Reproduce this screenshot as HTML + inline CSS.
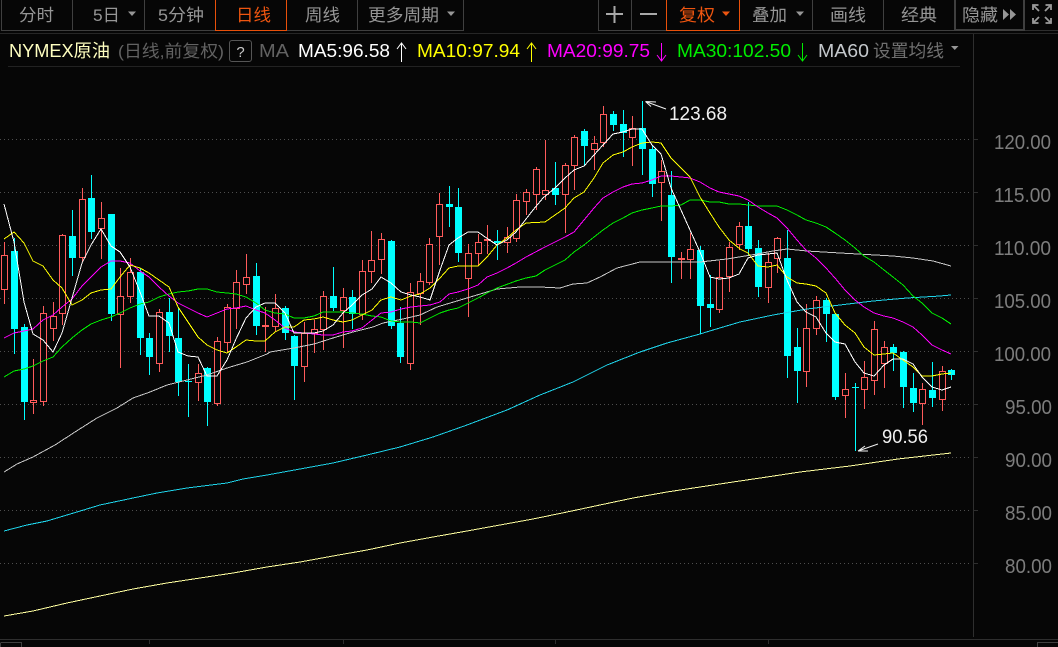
<!DOCTYPE html>
<html lang="zh">
<head>
<meta charset="utf-8">
<title>NYMEX原油</title>
<style>
html,body{margin:0;padding:0;width:1058px;height:647px;overflow:hidden;background:#060606}
svg{display:block}
text{font-family:"Liberation Sans","Noto Sans CJK SC",sans-serif}
.c{shape-rendering:crispEdges}
.l{fill:none;stroke-width:1;shape-rendering:crispEdges}
.t{font-size:17px;fill:#969696}
.ax{font-size:20px;fill:#7d7d7d}
.m{font-size:18px}
</style>
</head>
<body>
<svg width="1058" height="647" viewBox="0 0 1058 647" xmlns="http://www.w3.org/2000/svg">
<rect width="1058" height="647" fill="#060606"/>

<!-- toolbar frames -->
<g class="c" fill="none" stroke="#3f3f3f">
<path d="M1.5 0V30.5H463.5V0M72.5 0V30M144.5 0V30M357.5 0V30"/>
<path d="M598.5 0V30.5H1024.5V0M631.5 0V30M812.5 0V30M883.5 0V30M954.5 0V30"/>
<path d="M955.5 0V30M1023.5 0V30M955 29.5H1024"/>
<path d="M1025 30.5H1058" stroke="#2e2e2e"/>
</g>
<path class="c" d="M215.5 0V30.5H286.5V0M666.5 0V30.5H739.5V0" fill="none" stroke="#e8500a"/>
<path class="c" d="M0 33.5H1058" stroke="#262626" fill="none"/>
<path class="c" d="M8 66.5H960" stroke="#222" fill="none"/>

<!-- toolbar labels -->
<text class="t" x="19" y="21" textLength="35" lengthAdjust="spacingAndGlyphs">分时</text>
<text class="t" x="93" y="21" textLength="27" lengthAdjust="spacingAndGlyphs">5日</text>
<text class="t" x="158" y="21" textLength="46" lengthAdjust="spacingAndGlyphs">5分钟</text>
<text class="t" x="236" y="21" textLength="35" lengthAdjust="spacingAndGlyphs" style="fill:#ee5510">日线</text>
<text class="t" x="305" y="21" textLength="35" lengthAdjust="spacingAndGlyphs">周线</text>
<text class="t" x="368" y="21" textLength="71" lengthAdjust="spacingAndGlyphs">更多周期</text>
<text class="t" x="679" y="21" textLength="36" lengthAdjust="spacingAndGlyphs" style="fill:#ee5510">复权</text>
<text class="t" x="752" y="21" textLength="35" lengthAdjust="spacingAndGlyphs">叠加</text>
<text class="t" x="830" y="21" textLength="36" lengthAdjust="spacingAndGlyphs">画线</text>
<text class="t" x="901" y="21" textLength="36" lengthAdjust="spacingAndGlyphs">经典</text>
<text class="t" x="962" y="21" textLength="36" lengthAdjust="spacingAndGlyphs">隐藏</text>
<g fill="#969696">
<path d="M128 11.500h8l-4 4.500zM447 11.500h8l-4 4.500zM796 11.500h8l-4 4.500z"/>
<path d="M1003 9l6 5.500-6 5.500zM1010 9l6 5.500-6 5.500z"/>
<path d="M951 46h7.500l-3.750 4z"/>
</g>
<path d="M722 11.500h8l-4 4.500z" fill="#ee5510"/>
<g class="c" fill="#a8a8a8">
<rect x="606" y="13" width="17" height="2"/><rect x="613.500" y="6" width="2" height="17"/>
<rect x="640" y="13" width="17" height="2"/>
</g>
<g fill="none" stroke="#9a9a9a" stroke-width="1.800">
<path d="M1033 10V5H1038.500M1034 6L1039 11"/>
<path d="M1051 10V5H1045.500M1050 6L1045 11"/>
<path d="M1033 18V23H1038.500M1034 22L1039 17"/>
<path d="M1051 18V23H1045.500M1050 22L1045 17"/>
</g>

<!-- legend -->
<text class="m" x="9" y="57" textLength="101" lengthAdjust="spacingAndGlyphs" fill="#ffffc0">NYMEX原油</text>
<text x="118" y="57" font-size="17" textLength="106" lengthAdjust="spacingAndGlyphs" fill="#626262">(日线,前复权)</text>
<rect x="229.500" y="40.500" width="22" height="21" rx="2.500" fill="none" stroke="#555"/>
<text x="240.500" y="57" font-size="15" text-anchor="middle" fill="#c8c8c8">?</text>
<text class="m" x="259" y="57" textLength="30" lengthAdjust="spacingAndGlyphs" fill="#626262">MA</text>
<text class="m" x="298" y="57" textLength="92" lengthAdjust="spacingAndGlyphs" fill="#ffffff">MA5:96.58</text>
<text class="m" x="417" y="57" textLength="103" lengthAdjust="spacingAndGlyphs" fill="#ffff00">MA10:97.94</text>
<text class="m" x="547" y="57" textLength="103" lengthAdjust="spacingAndGlyphs" fill="#ff00ff">MA20:99.75</text>
<text class="m" x="677" y="57" textLength="114" lengthAdjust="spacingAndGlyphs" fill="#00ee00">MA30:102.50</text>
<text class="m" x="818" y="57" textLength="51" lengthAdjust="spacingAndGlyphs" fill="#c4c8cc">MA60</text>
<text x="873" y="57" font-size="17.500" textLength="71" lengthAdjust="spacingAndGlyphs" fill="#707070">设置均线</text>
<g fill="none">
<path d="M401.500 62V43M397 49L401.500 43L406 49" stroke="#fff"/>
<path d="M531.500 62V43M527 49L531.500 43L536 49" stroke="#ff0"/>
<path d="M661.500 43V61M657 55L661.500 61L666 55" stroke="#f0f"/>
<path d="M802.500 43V61M798 55L802.500 61L807 55" stroke="#0e0"/>
</g>

<!-- grid -->
<g class="c" fill="none" stroke="#4e4e4e" stroke-dasharray="1 3">
<path d="M0 139.500H971M0 192.500H971M0 245.500H971M0 298.500H971M0 351.500H971M0 404.500H971M0 457.500H971M0 510.500H971M0 563.500H971"/>
</g>
<g class="c" fill="none" stroke="#2e2e2e">
<path d="M973.500 34V637M0 639.500H1058"/>
<path d="M974 139.500H978M974 192.500H978M974 245.500H978M974 298.500H978M974 351.500H978M974 404.500H978M974 457.500H978M974 510.500H978M974 563.500H978"/>
<path d="M149.500 640V644M343.500 640V644M555.500 640V644M768.500 640V644"/>
</g>
<path class="c" d="M0.500 647V643.500Q0.500 642.500 2 642.500H21.500V647M1037.500 647V642.500H1058" fill="none" stroke="#3f3f3f"/>

<!-- axis labels -->
<text class="ax" x="994" y="149" textLength="57" lengthAdjust="spacingAndGlyphs">120.00</text>
<text class="ax" x="994" y="202" textLength="57" lengthAdjust="spacingAndGlyphs">115.00</text>
<text class="ax" x="994" y="255" textLength="57" lengthAdjust="spacingAndGlyphs">110.00</text>
<text class="ax" x="994" y="308" textLength="57" lengthAdjust="spacingAndGlyphs">105.00</text>
<text class="ax" x="994" y="361" textLength="57" lengthAdjust="spacingAndGlyphs">100.00</text>
<text class="ax" x="1005" y="414" textLength="47" lengthAdjust="spacingAndGlyphs">95.00</text>
<text class="ax" x="1005" y="467" textLength="47" lengthAdjust="spacingAndGlyphs">90.00</text>
<text class="ax" x="1005" y="520" textLength="47" lengthAdjust="spacingAndGlyphs">85.00</text>
<text class="ax" x="1005" y="573" textLength="47" lengthAdjust="spacingAndGlyphs">80.00</text>

<!-- cyan candles -->
<path class="c" fill="none" stroke="#00ffff" d="M14.500 238V354M24.500 324V420M72.500 210V276M91.500 175V239M111.500 214V321M140.500 268V355M149.500 333V375M169.500 298V352M178.500 308V396M188.500 364V417M207.500 367V426M256.500 263V335M285.500 306V340M294.500 335V400M333.500 267V311M352.500 290V329M391.500 240V329M400.500 307V363M449.500 186V227M458.500 188V262M497.500 230V260M555.500 162V205M584.500 129V166M613.500 111V131M623.500 110V157M642.500 101V175M652.500 145V197M671.500 171V283M700.500 246V334M710.500 275V327M748.500 202V255M758.500 240V297M787.500 230V378M797.500 328V403M826.500 298V342M835.500 314V400M855.500 383V451M893.500 344V371M903.500 351V408M913.500 373V412M932.500 362V407M951.500 369V380"/>
<path class="c" fill="#00ffff" d="M11 251h7v78h-7zM21 327h7v75h-7zM69 236h7v22h-7zM88 198h7v34h-7zM108 214h7v100h-7zM137 272h7v66h-7zM146 338h7v19h-7zM166 312h7v24h-7zM175 338h7v44h-7zM185 381h7v1h-7zM204 368h7v34h-7zM253 276h7v50h-7zM282 308h7v25h-7zM291 336h7v30h-7zM330 296h7v12h-7zM349 297h7v17h-7zM388 241h7v85h-7zM397 323h7v34h-7zM446 204h7v3h-7zM455 207h7v46h-7zM494 241h7v2h-7zM552 188h7v7h-7zM581 131h7v15h-7zM610 114h7v11h-7zM620 124h7v9h-7zM639 128h7v21h-7zM649 149h7v35h-7zM668 195h7v62h-7zM697 250h7v56h-7zM707 304h7v4h-7zM745 226h7v23h-7zM755 248h7v39h-7zM784 258h7v98h-7zM794 347h7v24h-7zM823 300h7v14h-7zM832 314h7v83h-7zM852 387h7v1h-7zM890 347h7v6h-7zM900 352h7v35h-7zM910 388h7v15h-7zM929 390h7v8h-7zM948 370h7v5h-7z"/>

<!-- red candles -->
<path class="c" fill="none" stroke="#ff5b5b" d="M4.500 242V304M33.500 359V414M43.500 306V406M53.500 302V341M62.500 234V325M82.500 188V262M101.500 202V259M120.500 268V368M130.500 258V303M159.500 309V372M198.500 364V401M217.500 337V406M227.500 304V352M236.500 270V329M246.500 254V294M265.500 307V352M275.500 294V332M304.500 322V382M314.500 320V353M323.500 291V350M343.500 288V348M362.500 260V320M371.500 231V283M381.500 233V274M410.500 283V370M420.500 273V325M429.500 238V285M439.500 193V265M468.500 244V317M478.500 234V266M487.500 225V254M507.500 227V253M516.500 194V242M526.500 189V215M536.500 167V210M545.500 140V200M565.500 163V233M574.500 135V190M594.500 136V170M603.500 106V147M632.500 116V166M661.500 160V221M681.500 252V279M690.500 233V279M719.500 261V313M729.500 242V292M739.500 222V250M768.500 253V303M777.500 237V273M806.500 304V387M816.500 296V335M845.500 373V418M864.500 361V409M874.500 321V395M884.500 341V388M922.500 383V425M942.500 366V411"/>
<path class="c" fill="#060606" stroke="#ff5b5b" d="M1.500 255.500h6v34h-6zM30.500 400.500h6v2h-6zM40.500 313.500h6v88h-6zM50.500 316.500h6v12h-6zM59.500 235.500h6v78h-6zM79.500 199.500h6v58h-6zM98.500 218.500h6v10h-6zM117.500 296.500h6v18h-6zM127.500 272.500h6v24h-6zM156.500 312.500h6v51h-6zM195.500 373.500h6v9h-6zM214.500 341.500h6v62h-6zM224.500 307.500h6v35h-6zM233.500 282.500h6v26h-6zM243.500 277.500h6v7h-6zM262.500 325.500h6v1h-6zM272.500 308.500h6v18h-6zM301.500 333.500h6v33h-6zM311.500 329.500h6v4h-6zM320.500 296.500h6v33h-6zM340.500 297.500h6v13h-6zM359.500 271.500h6v43h-6zM368.500 260.500h6v11h-6zM378.500 239.500h6v20h-6zM407.500 292.500h6v71h-6zM417.500 281.500h6v12h-6zM426.500 244.500h6v38h-6zM436.500 204.500h6v32h-6zM465.500 253.500h6v25h-6zM475.500 242.500h6v11h-6zM484.500 239.500h6v1h-6zM504.500 237.500h6v5h-6zM513.500 200.500h6v38h-6zM523.500 192.500h6v9h-6zM533.500 169.500h6v25h-6zM542.500 190.500h6v4h-6zM562.500 165.500h6v29h-6zM571.500 137.500h6v28h-6zM591.500 143.500h6v6h-6zM600.500 114.500h6v28h-6zM629.500 128.500h6v9h-6zM658.500 171.500h6v11h-6zM678.500 258.500h6v1h-6zM687.500 249.500h6v10h-6zM716.500 277.500h6v32h-6zM726.500 247.500h6v29h-6zM736.500 226.500h6v18h-6zM765.500 262.500h6v25h-6zM774.500 238.500h6v20h-6zM803.500 328.500h6v43h-6zM813.500 300.500h6v28h-6zM842.500 389.500h6v6h-6zM861.500 377.500h6v12h-6zM871.500 329.500h6v51h-6zM881.500 347.500h6v16h-6zM919.500 389.500h6v14h-6zM939.500 371.500h6v28h-6z"/>

<!-- moving averages -->
<polyline class="l" stroke="#ffffa0" points="4,616 33,611 67,603 100,596 133,589 167,583 200,578 233,573 267,567 300,562 333,556 367,550 400,543 433,537 467,531 500,525 533,519 567,512 600,505 633,498 667,492 700,487 733,482 767,477 800,472 850,466 898,459 951,453"/>
<polyline class="l" stroke="#1fd4ea" points="4,531 27,525 47,521 77,512 100,505 133,498 157,493 187,488 227,483 243,479 267,475 300,469 333,463 367,455 400,447 433,437 467,425 507,410 540,395 573,382 607,365 640,352 667,343 700,334 713,330 740,322 773,315 807,309 840,305 873,301 907,298 940,296 951,295"/>
<polyline class="l" stroke="#c8c8c8" points="4,472 17,464 33,457 55,445 75,432 97,418 117,408 133,398 150,392 167,385 187,380 207,375 227,368 247,362 267,354 270,352 294,348 314,344 333,338 353,332 373,327 383,323 403,319 420,315 437,307 457,301 477,295 497,289 520,287 540,287 560,288 573,284 587,283 600,277 617,268 640,262 667,262 700,262 727,259 757,254 773,251 787,249 807,251 840,253 893,256 913,258 933,261 951,266"/>
<polyline class="l" stroke="#00ee00" points="4,377 14,371 24,369 33,366 43,361 53,357 62,347 72,338 82,330 91,324 101,320 111,317 120,313 130,308 140,304 149,302 159,297 169,294 178,292 188,291 198,289 207,289 217,292 227,293 236,294 246,297 256,303 265,310 275,313 285,314 294,318 304,318 314,316 323,312 333,312 343,312 352,313 362,314 372,316 381,317 391,321 401,322 411,322 420,323 430,318 440,313 449,310 458,308 468,303 478,298 487,293 497,288 516,281 526,278 536,276 545,270 555,265 565,260 574,252 584,245 594,237 603,230 613,223 623,218 632,213 642,210 652,208 661,206 671,206 681,205 690,200 700,200 710,202 719,202 729,204 739,204 758,206 768,206 777,206 787,210 797,215 806,220 816,223 826,227 835,233 845,240 855,248 864,256 874,262 884,270 893,277 903,285 913,296 922,303 932,313 942,318 951,324"/>
<polyline class="l" stroke="#ff00ff" points="4,338 14,333 24,331 33,329 43,320 53,315 62,307 72,299 82,286 91,277 101,267 111,261 120,261 130,263 140,271 149,277 159,287 169,296 178,303 188,308 198,313 207,317 217,313 227,309 236,308 246,306 256,310 265,313 275,320 285,328 294,332 304,333 314,334 323,335 333,335 343,332 352,331 362,328 372,320 381,313 391,312 401,309 411,307 420,306 430,305 440,302 449,294 458,292 468,289 478,285 487,277 497,273 507,268 516,263 526,257 545,247 565,237 574,232 584,220 594,208 603,198 613,192 623,187 632,184 642,183 652,180 661,176 671,176 681,177 690,178 700,182 710,188 719,192 729,194 739,196 748,200 758,207 768,213 777,218 787,228 797,240 806,250 816,258 826,268 835,278 845,290 855,300 864,307 874,313 884,316 893,318 903,322 913,327 922,335 932,345 942,350 951,354"/>
<polyline class="l" stroke="#ffff00" points="4,239 14,232 24,243 33,261 43,266 53,280 62,288 72,305 82,300 91,293 101,290 111,289 120,277 130,265 140,268 149,273 159,280 169,287 178,307 188,322 198,337 207,345 217,350 227,353 236,347 246,340 256,341 265,341 275,332 285,327 294,327 304,320 314,319 323,317 333,320 343,322 352,320 362,315 372,310 381,300 391,297 401,300 411,296 420,294 430,288 440,278 449,268 458,266 468,266 478,266 487,257 497,245 507,238 516,230 526,223 545,222 555,215 565,208 574,198 584,192 594,178 603,163 613,155 623,152 632,147 642,143 652,142 661,143 671,158 681,168 690,177 700,197 710,213 719,227 729,240 740,249 748,253 758,266 768,267 777,265 787,277 797,283 806,284 816,286 826,293 835,313 845,325 855,333 864,347 874,355 884,354 893,353 903,360 913,367 922,376 932,376 942,374 951,373"/>
<polyline class="l" stroke="#ffffff" points="4,204 14,242 24,302 33,334 43,340 53,352 62,333 72,298 82,263 91,245 101,229 111,246 120,252 130,267 140,292 149,316 159,316 169,323 178,352 188,356 198,357 207,376 217,376 227,360 236,339 246,318 256,307 265,303 275,303 285,313 294,333 304,333 314,333 323,331 333,325 343,313 352,305 362,295 372,289 381,277 391,283 401,292 411,295 420,297 430,300 440,270 449,245 458,238 468,232 478,232 488,239 497,245 507,240 516,232 533,210 543,198 555,188 565,178 574,170 584,166 594,155 603,145 613,134 623,132 632,129 642,129 652,145 661,154 671,188 681,210 690,230 700,252 710,277 719,279 729,278 739,274 748,258 758,255 768,254 777,253 787,280 797,302 806,312 816,317 826,333 835,342 845,344 855,362 864,373 874,376 884,365 893,359 903,359 913,364 922,377 932,387 942,390 951,387"/>

<!-- callouts -->
<path d="M666 109L645.500 101.500M645.500 101.500L656 102M645.500 101.500L651 106.500" fill="none" stroke="#f0f0f0"/>
<text x="669" y="120" font-size="19" textLength="58" lengthAdjust="spacingAndGlyphs" fill="#f0f0f0">123.68</text>
<path d="M878 444L858 451M858 451L865 446M858 451L868 451" fill="none" stroke="#f0f0f0"/>
<text x="882" y="443" font-size="19" textLength="46" lengthAdjust="spacingAndGlyphs" fill="#f0f0f0">90.56</text>
</svg>
</body>
</html>
